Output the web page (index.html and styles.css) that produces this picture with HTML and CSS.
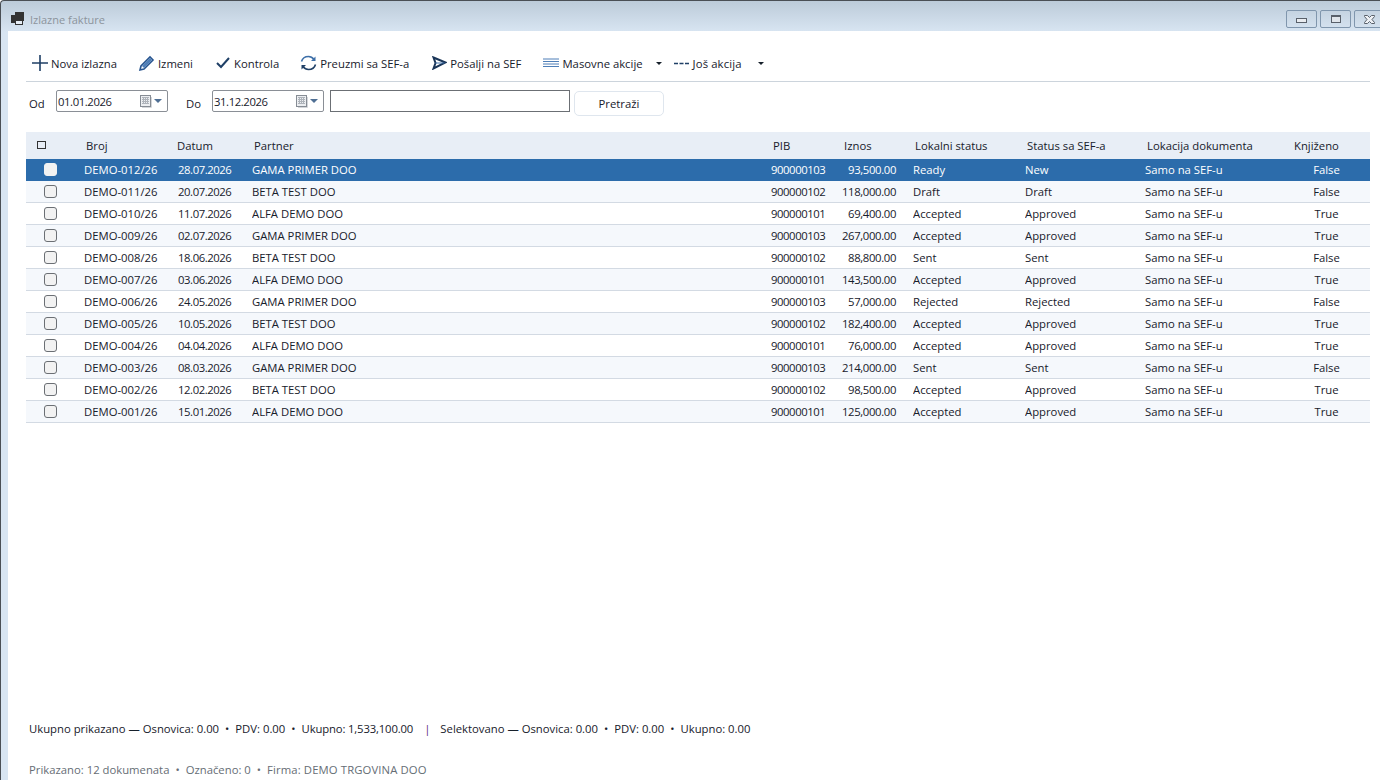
FILE: index.html
```html
<!DOCTYPE html>
<html lang="sr">
<head>
    <meta charset="UTF-8">
    <title>Izlazne fakture</title>
    <link rel="stylesheet" href="styles.css">
</head>
<body>
    <div class="window">
        <div class="titlebar">
            <svg class="app-icon" width="16" height="16" viewBox="0 0 16 16"><rect x="5" y="1" width="9" height="9" fill="#333"/><rect x="1" y="4" width="5" height="8" fill="#333"/><rect x="5" y="10" width="8" height="4" fill="#333"/><rect x="6" y="10" width="6" height="3" fill="#e6edf5"/></svg>
            <span class="title">Izlazne fakture</span>
            <div class="win-buttons">
                <div class="win-btn"><span class="glyph-min"></span></div>
                <div class="win-btn"><span class="glyph-max"></span></div>
                <div class="win-btn win-close">
                    <svg width="11" height="9" viewBox="0 0 11 9"><path d="M.5 .5h3l2 2 2-2h3v1l-2.500 3 2.500 3v1h-3l-2-2-2 2h-3v-1l2.500-3-2.500-3z" fill="#eef1f5" stroke="#59606a"/></svg>
                </div>
            </div>
        </div>
        <div class="content">
            <div class="toolbar">
                <div class="tool tool-new">
                    <svg width="18" height="18" viewBox="0 0 18 18"><path d="M9 1v16M1 9h16" stroke="#1f3f66" stroke-width="1.6" fill="none"/></svg>
                    <span>Nova izlazna</span>
                </div>
                <div class="tool tool-edit">
                    <svg width="17" height="17" viewBox="0 0 17 17"><path d="M2 15l1-4L12 2l3 3-9 9z" fill="#fff" stroke="#28558f" stroke-width="1.6"/><path d="M4 11l8-8 2 2-8 8z" fill="#4f7fb8"/></svg>
                    <span>Izmeni</span>
                </div>
                <div class="tool tool-check">
                    <svg width="14" height="12" viewBox="0 0 14 12"><path d="M1 6l4 4 8-9" stroke="#1f3f66" stroke-width="2" fill="none"/></svg>
                    <span>Kontrola</span>
                </div>
                <div class="tool tool-sync">
                    <svg width="17" height="16" viewBox="0 0 17 16"><path d="M1.500 6.500C2.500 3 5 1.500 8.500 1.500c2.500 0 4 1 5.500 3" stroke="#3d6fa8" stroke-width="1.600" fill="none"/><path d="M15.500 9.500C14.500 13 12 14.500 8.500 14.500c-2.500 0-4-1-5.500-3" stroke="#1f3f66" stroke-width="1.600" fill="none"/><path d="M15.500 1.500v4.500h-4.500z" fill="#3d6fa8"/><path d="M1.500 14.500v-4.500h4.500z" fill="#1f3f66"/></svg>
                    <span>Preuzmi sa SEF-a</span>
                </div>
                <div class="tool tool-send">
                    <svg width="15" height="14" viewBox="0 0 15 14"><path d="M1.500 1.500L13.500 6.500 1.500 12.500l2-5.500z" fill="#fff" stroke="#1a3558" stroke-width="2"/><path d="M3.500 7h9" stroke="#3d6fa8"/></svg>
                    <span>Pošalji na SEF</span>
                </div>
                <div class="tool tool-mass">
                    <svg width="16" height="10" viewBox="0 0 16 10"><path d="M0 1h16M0 3.500h16M0 6h16M0 8.500h16" stroke="#4f7fb8" fill="none"/></svg>
                    <span>Masovne akcije</span>
                    <span class="caret caret-mass"></span>
                </div>
                <div class="tool tool-more">
                    <svg width="15" height="3" viewBox="0 0 15 3"><path d="M0 1.500h4M5.500 1.500h4M11 1.500h4" stroke="#1f3f66" stroke-width="1.300" fill="none"/></svg>
                    <span class="wide">Još akcija</span>
                    <span class="caret caret-more"></span>
                </div>
            </div>

            <div class="filters">
                <label class="lbl-od">Od</label>
                <div class="date-box">
                    <span>01.01.2026</span>
                    <svg class="cal" width="12" height="13" viewBox="0 0 12 13"><rect x=".5" y=".5" width="10" height="11" fill="#eceef1" stroke="#868c94"/><path d="M2 2.500h7M2 4.500h7M2 6.500h7M2 8.500h7M3.500 2v7M5.500 2v7M7.500 2v7" stroke="#aeb3ba" fill="none"/><path d="M11.500 2v10.500H2" stroke="#d4d6da" fill="none"/></svg>
                    <span class="date-caret"></span>
                </div>
                <label class="lbl-do">Do</label>
                <div class="date-box">
                    <span>31.12.2026</span>
                    <svg class="cal" width="12" height="13" viewBox="0 0 12 13"><rect x=".5" y=".5" width="10" height="11" fill="#eceef1" stroke="#868c94"/><path d="M2 2.500h7M2 4.500h7M2 6.500h7M2 8.500h7M3.500 2v7M5.500 2v7M7.500 2v7" stroke="#aeb3ba" fill="none"/><path d="M11.500 2v10.500H2" stroke="#d4d6da" fill="none"/></svg>
                    <span class="date-caret"></span>
                </div>
                <input class="search" type="text">
                <button class="search-btn" type="button">Pretraži</button>
            </div>

            <table class="grid">
                <thead>
                    <tr>
                        <th class="c-check"><span class="head-box"></span></th>
                        <th class="c-broj">Broj</th>
                        <th class="c-datum">Datum</th>
                        <th class="c-partner">Partner</th>
                        <th class="c-pib">PIB</th>
                        <th class="c-iznos">Iznos</th>
                        <th class="c-lokalni">Lokalni status</th>
                        <th class="c-sef">Status sa SEF-a</th>
                        <th class="c-lok">Lokacija dokumenta</th>
                        <th class="c-knj">Knjiženo</th>
                    </tr>
                </thead>
                <tbody>
                    <tr class="selected"><td class="c-check"><span class="box"></span></td><td>DEMO-012/26</td><td>28.07.2026</td><td>GAMA PRIMER DOO</td><td>900000103</td><td class="num">93,500.00</td><td>Ready</td><td>New</td><td>Samo na SEF-u</td><td class="mid">False</td></tr>
                    <tr class="alt"><td class="c-check"><span class="box"></span></td><td>DEMO-011/26</td><td>20.07.2026</td><td>BETA TEST DOO</td><td>900000102</td><td class="num">118,000.00</td><td>Draft</td><td>Draft</td><td>Samo na SEF-u</td><td class="mid">False</td></tr>
                    <tr><td class="c-check"><span class="box"></span></td><td>DEMO-010/26</td><td>11.07.2026</td><td>ALFA DEMO DOO</td><td>900000101</td><td class="num">69,400.00</td><td>Accepted</td><td>Approved</td><td>Samo na SEF-u</td><td class="mid">True</td></tr>
                    <tr class="alt"><td class="c-check"><span class="box"></span></td><td>DEMO-009/26</td><td>02.07.2026</td><td>GAMA PRIMER DOO</td><td>900000103</td><td class="num">267,000.00</td><td>Accepted</td><td>Approved</td><td>Samo na SEF-u</td><td class="mid">True</td></tr>
                    <tr><td class="c-check"><span class="box"></span></td><td>DEMO-008/26</td><td>18.06.2026</td><td>BETA TEST DOO</td><td>900000102</td><td class="num">88,800.00</td><td>Sent</td><td>Sent</td><td>Samo na SEF-u</td><td class="mid">False</td></tr>
                    <tr class="alt"><td class="c-check"><span class="box"></span></td><td>DEMO-007/26</td><td>03.06.2026</td><td>ALFA DEMO DOO</td><td>900000101</td><td class="num">143,500.00</td><td>Accepted</td><td>Approved</td><td>Samo na SEF-u</td><td class="mid">True</td></tr>
                    <tr><td class="c-check"><span class="box"></span></td><td>DEMO-006/26</td><td>24.05.2026</td><td>GAMA PRIMER DOO</td><td>900000103</td><td class="num">57,000.00</td><td>Rejected</td><td>Rejected</td><td>Samo na SEF-u</td><td class="mid">False</td></tr>
                    <tr class="alt"><td class="c-check"><span class="box"></span></td><td>DEMO-005/26</td><td>10.05.2026</td><td>BETA TEST DOO</td><td>900000102</td><td class="num">182,400.00</td><td>Accepted</td><td>Approved</td><td>Samo na SEF-u</td><td class="mid">True</td></tr>
                    <tr><td class="c-check"><span class="box"></span></td><td>DEMO-004/26</td><td>04.04.2026</td><td>ALFA DEMO DOO</td><td>900000101</td><td class="num">76,000.00</td><td>Accepted</td><td>Approved</td><td>Samo na SEF-u</td><td class="mid">True</td></tr>
                    <tr class="alt"><td class="c-check"><span class="box"></span></td><td>DEMO-003/26</td><td>08.03.2026</td><td>GAMA PRIMER DOO</td><td>900000103</td><td class="num">214,000.00</td><td>Sent</td><td>Sent</td><td>Samo na SEF-u</td><td class="mid">False</td></tr>
                    <tr><td class="c-check"><span class="box"></span></td><td>DEMO-002/26</td><td>12.02.2026</td><td>BETA TEST DOO</td><td>900000102</td><td class="num">98,500.00</td><td>Accepted</td><td>Approved</td><td>Samo na SEF-u</td><td class="mid">True</td></tr>
                    <tr class="alt"><td class="c-check"><span class="box"></span></td><td>DEMO-001/26</td><td>15.01.2026</td><td>ALFA DEMO DOO</td><td>900000101</td><td class="num">125,000.00</td><td>Accepted</td><td>Approved</td><td>Samo na SEF-u</td><td class="mid">True</td></tr>
                </tbody>
            </table>

            <div class="totals">
                <span>Ukupno prikazano — Osnovica: 0.00</span><i>•</i><span>PDV: 0.00</span><i>•</i><span class="tight">Ukupno: 1,533,100.00</span><b>|</b><span>Selektovano — Osnovica: 0.00</span><i>•</i><span>PDV: 0.00</span><i>•</i><span>Ukupno: 0.00</span>
            </div>
            <div class="status">
                <span>Prikazano: 12 dokumenata</span><i>•</i><span>Označeno: 0</span><i>•</i><span class="wide">Firma: DEMO TRGOVINA DOO</span>
            </div>
        </div>
    </div>
</body>
</html>
```

FILE: styles.css
```css
* {
    box-sizing: border-box;
}

html, body {
    margin: 0;
    padding: 0;
    height: 100%;
    overflow: hidden;
}

body {
    font-family: "Open Sans", "Noto Sans", sans-serif;
    font-size: 11.3px;
    color: #17202b;
    background: #fff;
}

.window {
    height: 780px;
    display: flex;
    flex-direction: column;
    border-top: 1px solid #4a4f55;
    border-left: 1px solid #4a4f55;
    border-top-left-radius: 4px;
    background: linear-gradient(#bccbd9, #d8e5f2 31px);
}

.titlebar {
    height: 30px;
    flex: none;
    display: flex;
    align-items: center;
    padding: 5px 0 0 9px;
}

.app-icon {
    flex: none;
}

.title {
    margin: 1px 0 0 4px;
    color: #8c949c;
    font-size: 11px;
}

.win-buttons {
    margin-left: auto;
    align-self: flex-start;
    margin-top: 4px;
    margin-right: -5px;
    display: flex;
    gap: 3px;
}

.win-btn {
    width: 31px;
    height: 18px;
    border: 1px solid #8096ad;
    border-radius: 2px;
    display: flex;
    align-items: center;
    justify-content: center;
}

.glyph-min {
    width: 11px;
    height: 5px;
    margin-top: 3px;
    background: #e9ecf0;
    border: 1px solid #59606a;
}

.glyph-max {
    width: 10px;
    height: 8px;
    background: #e0e5eb;
    border: 1px solid #59606a;
    border-top-width: 2px;
}

.content {
    flex: 1;
    display: flex;
    flex-direction: column;
    background: #fff;
    margin-left: 7px;
    padding: 0 10px 0 18px;
}

.toolbar {
    height: 51px;
    padding-top: 20px;
    display: flex;
    align-items: flex-start;
    border-bottom: 1px solid #ccd4dc;
}

.tool {
    display: flex;
    align-items: center;
    height: 24px;
}

.tool svg {
    flex: none;
}

.tool-new { margin-left: 5px; gap: 2px; }
.tool-edit { margin-left: 21px; gap: 3px; }
.tool-check { margin-left: 23px; gap: 4px; }
.tool-sync { margin-left: 21px; gap: 3px; }
.tool-send { margin-left: 23px; gap: 3px; }
.tool-mass { margin-left: 22px; gap: 3px; }
.tool-more { margin-left: 0; gap: 4px; }

.caret {
    width: 0;
    height: 0;
    border-top: 3px solid #17202b;
    border-left: 3px solid transparent;
    border-right: 3px solid transparent;
}

.caret-mass { margin: 0 12px 0 10px; }
.caret-more { margin-left: 12px; }

.filters {
    height: 50px;
    padding-top: 8px;
    display: flex;
    align-items: flex-start;
}

.filters label {
    margin-top: 6px;
}

.lbl-od { width: 30px; padding-left: 3px; }
.lbl-do { width: 44px; padding-left: 18px; }

.date-box {
    width: 112px;
    height: 22px;
    border: 1px solid #8a8f96;
    border-radius: 2px;
    display: flex;
    align-items: center;
    padding-left: 1px;
    letter-spacing: -0.4px;
}

.cal {
    margin-left: auto;
}

.date-caret {
    margin: 0 5px 0 2px;
    width: 0;
    height: 0;
    border-top: 4px solid #4f6f94;
    border-left: 4px solid transparent;
    border-right: 4px solid transparent;
}

.search {
    width: 240px;
    height: 22px;
    margin: 0 4px 0 6px;
    border: 1px solid #6b6f74;
    border-radius: 0;
    background: #fff;
    padding: 0;
}

.search-btn {
    width: 90px;
    height: 25px;
    margin-top: 1px;
    background: #fff;
    border: 1px solid #dfe6ee;
    border-radius: 5px;
    font: inherit;
    color: inherit;
    padding: 0;
}

.grid {
    width: 1344px;
    border-collapse: collapse;
    table-layout: fixed;
    flex: none;
}

.grid th {
    height: 27px;
    background: #e8eef6;
    font-weight: 400;
    text-align: left;
    padding: 0 0 1px 2px;
}

.grid td {
    height: 22px;
    padding: 0;
    border-bottom: 1px solid #d3dae3;
    white-space: nowrap;
    overflow: hidden;
}

.alt td {
    background: #f5f8fc;
}

.selected td {
    height: 21px;
    background: #2c6cab;
    color: #fff;
    border-bottom-color: #2c6cab;
}

.c-check { width: 58px; }
.c-broj { width: 94px; }
.c-datum { width: 74px; }
.c-partner { width: 519px; }
.c-pib { width: 68px; }
.c-iznos { width: 74px; }
.c-lokalni { width: 112px; }
.c-sef { width: 120px; }
.c-lok { width: 138px; }
.c-knj { width: 87px; }

/* header labels don't line up with their columns */
.grid th.c-datum { padding-left: 0; text-indent: -1px; }
.grid th.c-iznos { padding-left: 5px; }
.grid th.c-knj { padding-left: 11px; }

.grid th.c-check {
    padding-left: 11px;
}

.head-box {
    display: block;
    width: 9px;
    height: 8px;
    border: 1px solid #333;
}

.grid td.c-check {
    padding-left: 18px;
}

.box {
    display: block;
    width: 13px;
    height: 13px;
    background: #f2f2f2;
    border: 1px solid #6b6f74;
    border-radius: 3px;
}

.selected .box {
    background: #f2f2f2;
    border-color: #f2f2f2;
}

.grid td:nth-child(3),
.grid td:nth-child(5) {
    letter-spacing: -0.42px;
}

.grid td.num {
    text-align: right;
    padding-right: 17px;
    letter-spacing: -0.35px;
}

.grid td.mid {
    text-align: center;
}

.totals {
    margin-top: auto;
    padding-left: 3px;
    display: flex;
    align-items: center;
    height: 20px;
    position: relative;
    top: -1px;
}

.totals i, .status i {
    font-style: normal;
    margin: 0 6px;
}

.totals b {
    font-weight: 400;
    color: #5e2a78;
    margin: 0 10px 0 11px;
}

.tight {
    letter-spacing: -0.15px;
}

.wide {
    letter-spacing: 0.12px;
}

.status {
    margin-top: 20px;
    margin-bottom: 1px;
    height: 20px;
    padding-left: 3px;
    display: flex;
    align-items: center;
    color: #666d75;
}
```
